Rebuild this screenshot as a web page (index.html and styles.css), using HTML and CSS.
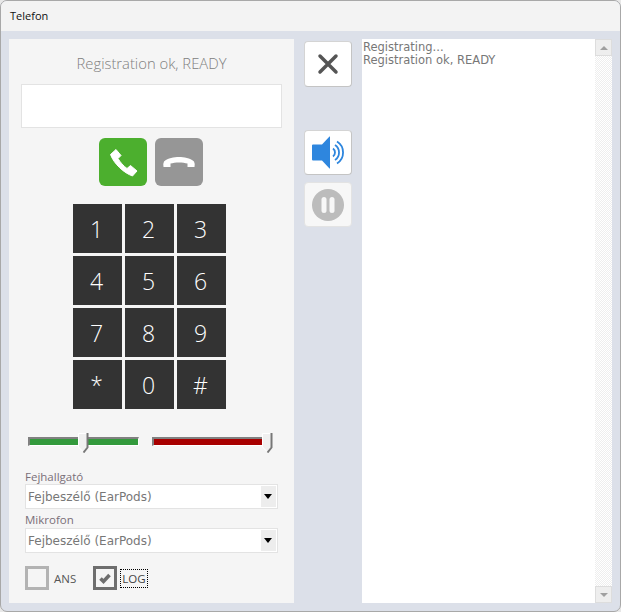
FILE: index.html
```html
<!DOCTYPE html>
<html>
<head>
  <meta charset="utf-8">
  <title>Telefon</title>
  <link rel="stylesheet" href="styles.css">
</head>
<body>
  <div class="window">
    <div class="titlebar">Telefon</div>
    <div class="content">
      <div class="panel">
        <div class="status">Registration ok, READY</div>
        <div class="number"></div>
        <div class="call_row">
          <div class="call_btn green">
            <svg width="48" height="48" viewBox="0 0 48 48"><path fill="#fff" stroke="#fff" stroke-linejoin="round" d="M11.500 16.500L17 11.500L22 17.500L19 20.500C21 24 24.500 28 28 30.500L31.500 27.500L38 33L33.500 38C25 35 15 26 11.500 16.500z"/></svg>
          </div>
          <div class="call_btn grey">
            <svg width="48" height="48" viewBox="0 0 48 48"><path fill="#fff" d="M8.500 29Q8 25 9 23.500C13 20 19 19 24 19S35 20 39 23.500Q40 25 39.500 29H32.500V25.500C28 24 20 24 15.500 25.500V29z"/></svg>
          </div>
        </div>
        <div class="keypad">
          <div class="key">1</div><div class="key">2</div><div class="key">3</div>
          <div class="key">4</div><div class="key">5</div><div class="key">6</div>
          <div class="key">7</div><div class="key">8</div><div class="key">9</div>
          <div class="key">*</div><div class="key">0</div><div class="key">#</div>
        </div>
        <div class="sliders">
          <div class="slider green_track">
            <svg class="thumb thumb_mid" width="11" height="20" viewBox="0 0 11 20"><path fill="#f0f0f0" stroke="#fff" d="M.5.500H9V14L5.500 19L.5 14z"/><path fill="none" stroke="#777" stroke-width="2" d="M9.500 0V14.500L5.500 19.500"/></svg>
          </div>
          <div class="slider red_track">
            <svg class="thumb thumb_end" width="11" height="20" viewBox="0 0 11 20"><path fill="#f0f0f0" stroke="#fff" d="M.5.500H9V14L5.500 19L.5 14z"/><path fill="none" stroke="#777" stroke-width="2" d="M9.500 0V14.500L5.500 19.500"/></svg>
          </div>
        </div>
        <div class="field_label first">Fejhallgató</div>
        <div class="select"><span>Fejbeszélő (EarPods)</span><div class="select_arrow"></div></div>
        <div class="field_label">Mikrofon</div>
        <div class="select"><span>Fejbeszélő (EarPods)</span><div class="select_arrow"></div></div>
        <div class="checks">
          <div class="check"></div>
          <span class="check_label">ANS</span>
          <div class="check checked">
            <svg width="18" height="18" viewBox="0 0 18 18"><path fill="none" stroke="#6e6e6e" stroke-width="3.600" d="M4.500 9.500l3 3L13.500 6"/></svg>
          </div>
          <span class="check_label focused">LOG</span>
        </div>
      </div>
      <div class="tools">
        <div class="tool">
          <svg width="24" height="24" viewBox="0 0 24 24"><path stroke="#555" stroke-width="3.500" stroke-linecap="round" d="M4 4l16 16M20 4L4 20"/></svg>
        </div>
        <div class="tool sound">
          <svg width="36" height="36" viewBox="0 0 36 36"><path fill="#2e86de" d="M3 9.500H12L19.500 1.500H20V33.500H19.500L12 25.500H3a1 1 0 0 1-1-1V10.500a1 1 0 0 1 1-1z"/><g fill="none" stroke="#2e86de" stroke-width="1.800"><path d="M23 13.500A5 5 0 0 1 23 21.500"/><path d="M25 10A9 9 0 0 1 25 25"/><path d="M27 6.500A13 13 0 0 1 27 28.500"/></g></svg>
        </div>
        <div class="tool disabled">
          <svg width="32" height="32" viewBox="0 0 32 32"><circle cx="16" cy="16" r="16" fill="#bcbcbc"/><rect x="9.500" y="8" width="5" height="16" rx="2.500" fill="#f7f7f7"/><rect x="17.500" y="8" width="5" height="16" rx="2.500" fill="#f7f7f7"/></svg>
        </div>
      </div>
      <div class="log">
        <div class="log_text">Registrating...<br>Registration ok, READY</div>
        <div class="scrollbar">
          <div class="scroll_btn"><div class="arrow_up"></div></div>
          <div class="scroll_btn"><div class="arrow_down"></div></div>
        </div>
      </div>
    </div>
  </div>
</body>
</html>
```

FILE: styles.css
```css
html, body {
  margin: 0;
  background: #e8e8e8;
}
body {
  width: 621px;
  height: 612px;
  overflow: hidden;
  font-family: "Open Sans", sans-serif;
}
.window {
  height: 612px;
  box-sizing: border-box;
  background: #dce0e9;
  border: 1px solid #a8a8a8;
  border-radius: 7px;
  overflow: hidden;
  display: flex;
  flex-direction: column;
}
.titlebar {
  height: 30px;
  background: #f3f3f3;
  padding-left: 9px;
  font-size: 11px;
  line-height: 30px;
  color: #111;
}
.content {
  display: flex;
  padding: 8px;
  flex: 1;
  min-height: 0;
}
.panel {
  width: 285px;
  background: #f5f5f5;
  box-sizing: border-box;
  padding: 0 12px;
}
.status {
  margin-top: 14px;
  height: 20px;
  line-height: 20px;
  text-align: center;
  font-size: 14.800px;
  font-weight: 300;
  color: #808080;
}
.number {
  margin-top: 11px;
  width: 261px;
  height: 44px;
  box-sizing: border-box;
  background: #fff;
  border: 1px solid #e3e3e3;
}
.call_row {
  display: flex;
  justify-content: center;
  gap: 8px;
  margin-top: 10px;
  padding-right: 1px;
}
.call_btn {
  width: 48px;
  height: 48px;
  border-radius: 6px;
}
.green { background: #4caf2e; }
.grey { background: #969696; }
.keypad {
  display: grid;
  grid-template-columns: repeat(3, 49px);
  grid-auto-rows: 49px;
  gap: 3px;
  margin: 18px 0 0 52px;
}
.key {
  background: #333;
  color: #fff;
  font-size: 23px;
  font-weight: 300;
  padding-right: 2px;
  display: flex;
  align-items: center;
  justify-content: center;
}
.sliders {
  display: flex;
  gap: 13px;
  margin: 28px 0 0 7px;
}
.slider {
  position: relative;
  width: 111px;
  height: 9px;
  box-sizing: border-box;
  border: 2px solid;
  border-color: #808080 #fff #fff #808080;
  border-width: 2px 1px 1px 2px;
}
.green_track { background: #339a3c; }
.red_track { background: #a80000; }
.thumb {
  position: absolute;
  top: -6px;
}
.thumb_mid { left: 48px; }
.thumb_end { right: -11px; }
.field_label {
  margin: 4px 0 0 4px;
  height: 14px;
  line-height: 13px;
  font-size: 11.500px;
  color: #7a6f78;
}
.field_label.first { margin-top: 24px; height: 13px; }
.select {
  display: flex;
  align-items: center;
  justify-content: space-between;
  margin: 1px 0 0 4px;
  width: 253px;
  height: 25px;
  box-sizing: border-box;
  background: #fff;
  border: 1px solid #e3e3e3;
  padding-left: 2px;
  font-family: "DejaVu Sans", sans-serif;
  font-size: 12px;
  color: #777;
}
.select_arrow {
  position: relative;
  width: 15px;
  height: 21px;
  margin-right: 1px;
  background: #ededed;
}
.select_arrow:after {
  content: "";
  position: absolute;
  left: 3px;
  top: 8px;
  border-left: 4.500px solid transparent;
  border-right: 4.500px solid transparent;
  border-top: 5px solid #000;
}
.checks {
  display: flex;
  align-items: center;
  margin: 13px 0 0 4px;
}
.check {
  width: 24px;
  height: 24px;
  box-sizing: border-box;
  border: 3px solid #b3b3b3;
  display: flex;
  align-items: center;
  justify-content: center;
}
.check.checked { border-color: #6e6e6e; }
.check_label {
  font-size: 11.500px;
  color: #555;
  margin: 0 16px 0 4px;
  padding: 0 1px;
  line-height: 17px;
}
.focused {
  outline: 1px dotted #000;
  color: #444;
  margin-right: 0;
}
.tools {
  width: 48px;
  margin: 2px 10px 0 10px;
  display: flex;
  flex-direction: column;
  gap: 7px;
}
.tool {
  width: 48px;
  height: 46px;
  box-sizing: border-box;
  background: #fff;
  border: 1px solid #d4d4d4;
  border-right-color: #c4c4c4;
  border-bottom-color: #c4c4c4;
  border-radius: 4px;
  display: flex;
  align-items: center;
  justify-content: center;
}
.tool.sound { margin-top: 36px; height: 45px; }
.tool.disabled {
  height: 45px;
  background: #f7f7f7;
  border-color: #e3e3e3;
}
.log {
  flex: 1;
  background: #fff;
  display: flex;
  justify-content: space-between;
  min-width: 0;
}
.log_text {
  padding: 2px 0 0 1px;
  font-family: "DejaVu Sans", sans-serif;
  font-size: 11.500px;
  line-height: 13px;
  color: #777;
}
.scrollbar {
  width: 17px;
  display: flex;
  flex-direction: column;
  justify-content: space-between;
  background: repeating-conic-gradient(#eee 0 25%, #fff 0 50%) 0 0 / 2px 2px;
}
.scroll_btn {
  height: 17px;
  background: #eee;
  border: 1px solid #ddd;
  box-sizing: border-box;
  display: flex;
  align-items: center;
  justify-content: center;
}
.arrow_up {
  border-left: 4px solid transparent;
  border-right: 4px solid transparent;
  border-bottom: 4px solid #a0a0a0;
}
.arrow_down {
  border-left: 4px solid transparent;
  border-right: 4px solid transparent;
  border-top: 4px solid #a0a0a0;
}
```
